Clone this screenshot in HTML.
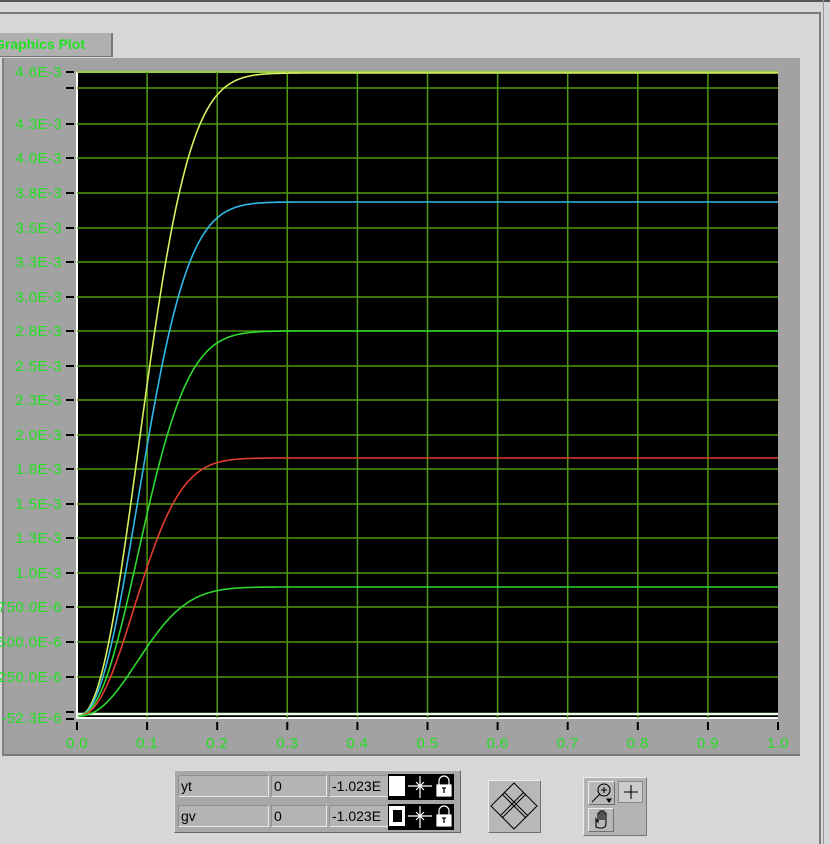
<!DOCTYPE html>
<html><head><meta charset="utf-8"><style>
html,body{margin:0;padding:0;width:830px;height:844px;overflow:hidden;background:#d7d7d7;font-family:"Liberation Sans",sans-serif}
.abs{position:absolute}
.cell{position:absolute;background:#b4b4b4;border-top:1px solid #909090;border-left:1px solid #909090;border-bottom:1px solid #e8e8e8;border-right:1px solid #e8e8e8;font-size:14px;line-height:20px;padding-left:2px;box-sizing:border-box;color:#000;overflow:hidden;white-space:nowrap}
.btn{position:absolute;background:#b8b8b8;border-top:1px solid #eee;border-left:1px solid #eee;border-right:1px solid #707070;border-bottom:1px solid #707070;box-sizing:border-box}
</style></head><body>
<div class="abs" style="left:0;top:0;width:830px;height:2px;background:#555"></div>
<div class="abs" style="left:0;top:12px;width:821px;height:2px;background:#7a7a7a"></div>
<div class="abs" style="left:819px;top:12px;width:2px;height:832px;background:#7a7a7a"></div>
<div class="abs" style="left:823px;top:0;width:1px;height:844px;background:#999"></div>
<div class="abs" style="left:0;top:33px;width:113px;height:24px;background:#b0b0b0;border-right:2px solid #777;border-bottom:1px solid #777;box-sizing:border-box;color:#22e022;font-weight:bold;font-size:14px;line-height:23px;white-space:nowrap;overflow:hidden;text-indent:-6px">Graphics Plot</div>
<svg class="abs" style="left:0;top:0" width="830" height="844" id="s">
<rect x="2" y="58" width="798" height="698" fill="#a2a2a2"/>
<rect x="2" y="58" width="2" height="698" fill="#808080"/>
<rect x="2" y="754" width="798" height="2" fill="#7a7a7a"/>
<rect x="77" y="72" width="701" height="647" fill="#000"/>
<line x1="77" y1="72" x2="77" y2="719" stroke="#fff" stroke-width="2"/>
<line x1="77" y1="718" x2="778" y2="718" stroke="#fff" stroke-width="2"/>
<line x1="77" y1="72" x2="778" y2="72" stroke="#9acd45" stroke-width="2"/>
<g id="grid" stroke="#4f9a10" stroke-width="1.5"></g>
<g id="ticks" stroke="#000" stroke-width="2"></g>
<g id="lab" fill="#22e022" font-size="15" letter-spacing="0.4" font-family="Liberation Sans,sans-serif"></g>
<line x1="77" y1="714" x2="778" y2="714" stroke="#e8ffe0" stroke-width="2.5"/>
<g id="curves" fill="none" stroke-width="1.6"></g>
</svg>
<div class="abs" style="left:174px;top:770px;width:287px;height:63px;background:#a8a8a8;border-right:1px solid #666;border-bottom:1px solid #666;border-top:1px solid #ddd;border-left:1px solid #ddd;box-sizing:border-box"></div>
<div class="cell" style="left:178px;top:775px;width:91px;height:22px">yt</div>
<div class="cell" style="left:271px;top:775px;width:56px;height:22px">0</div>
<div class="cell" style="left:329px;top:775px;width:60px;height:22px">-1.023E</div>
<div class="cell" style="left:178px;top:805px;width:91px;height:22px">gv</div>
<div class="cell" style="left:271px;top:805px;width:56px;height:22px">0</div>
<div class="cell" style="left:329px;top:805px;width:60px;height:22px">-1.023E</div>
<svg class="abs" style="left:388px;top:774px" width="66" height="56">
<rect x="0" y="0" width="66" height="26" fill="#000"/>
<rect x="1" y="2" width="16" height="20" fill="#fff"/>
<rect x="0" y="30" width="66" height="26" fill="#000"/>
<rect x="1" y="32" width="16" height="20" fill="#fff"/><rect x="5" y="36" width="9" height="12" fill="#000"/>
<g stroke="#fff" stroke-width="1.2" fill="none">
<path d="M20 12H44M32 2V24M28 8L36 16M36 8L28 16"/>
<path d="M20 42H44M32 32V54M28 38L36 46M36 38L28 46"/>
<path d="M51 11V7a5 5 0 0 1 10 0V11"/><rect x="49" y="11" width="14" height="11" fill="#fff"/>
<path d="M51 41V37a5 5 0 0 1 10 0V41"/><rect x="49" y="41" width="14" height="11" fill="#fff"/>
</g>
<path d="M54 14h4M56 14v5M54 44h4M56 44v5" stroke="#000" stroke-width="1.3"/>
</svg>
<div class="btn" style="left:488px;top:780px;width:53px;height:53px"></div>
<svg class="abs" style="left:488px;top:780px" width="53" height="53" fill="none" stroke="#000" stroke-width="1">
<path d="M26 3L49 26L26 49L3 26Z"/>
<path d="M14 14L38 38M16 12L40 36M38 14L14 38M36 12L12 36"/>
</svg>
<div class="abs" style="left:583px;top:777px;width:64px;height:59px;background:#b4b4b4;border-top:1px solid #eee;border-left:1px solid #eee;border-right:1px solid #777;border-bottom:1px solid #777;box-sizing:border-box"></div>
<div class="btn" style="left:588px;top:781px;width:27px;height:24px"></div>
<div class="abs" style="left:618px;top:781px;width:25px;height:22px;background:#ccc;border:1px solid #888;box-sizing:border-box"></div>
<div class="btn" style="left:588px;top:808px;width:26px;height:24px"></div>
<svg class="abs" style="left:588px;top:781px" width="58" height="52" fill="none" stroke="#000" stroke-width="1.1">
<circle cx="16" cy="9" r="6"/><path d="M13 9h6M16 6v6M12 13L4 21"/><path d="M19 18l4 0-2 3z" fill="#000"/>
<path d="M43 4v14M36 11h14"/>
<path d="M8 46v-8l2 3v-9h2v7v-9h2v9v-9h2v9v-7h2v10q0 5-4 5h-3z"/>
</svg>
<script>
const s='http://www.w3.org/2000/svg';
function el(p,t,a,txt){const e=document.createElementNS(s,t);for(const k in a)e.setAttribute(k,a[k]);if(txt)e.textContent=txt;document.getElementById(p).appendChild(e);}
const ys=[[72,'4.6E-3'],[88,''],[124,'4.3E-3'],[158,'4.0E-3'],[193,'3.8E-3'],[228,'3.5E-3'],[262,'3.3E-3'],[297,'3.0E-3'],[331,'2.8E-3'],[366,'2.5E-3'],[400,'2.3E-3'],[435,'2.0E-3'],[469,'1.8E-3'],[504,'1.5E-3'],[538,'1.3E-3'],[573,'1.0E-3'],[607,'750.0E-6'],[642,'500.0E-6'],[677,'250.0E-6'],[712,''],[719,'-52.3E-6']];
ys.forEach(([y,t],i)=>{ if(i>0&&y<712) el('grid','line',{x1:77,x2:778,y1:y,y2:y}); el('ticks','line',{x1:66,x2:74,y1:y,y2:y}); if(t) el('lab','text',{x:62,y:(t=='-52.3E-6'?y+4:y+5),'text-anchor':'end'},t);});
for(let i=0;i<=10;i++){const x=77+i*70.1; if(i>0&&i<10) el('grid','line',{x1:x,x2:x,y1:72,y2:718}); el('ticks','line',{x1:x,x2:x,y1:722,y2:730}); el('lab','text',{x:x,y:748,'text-anchor':'middle','font-size':'15'},(i/10).toFixed(1));}
const cs=[[73,'#d8f060',80],[202,'#30b8e8',79],[331,'#30d830',79],[458,'#e03c30',74],[587,'#30d830',78]];
cs.forEach(([py,c,tau])=>{let d='M78 716';for(let x=79;x<=778;x+=1){const dx=x-78;const f=1-Math.exp(-Math.pow(dx/tau,2.2));d+=' L'+x+' '+(716-(716-py)*f).toFixed(1);}el('curves','path',{d:d,stroke:c});});
</script>
</body></html>
